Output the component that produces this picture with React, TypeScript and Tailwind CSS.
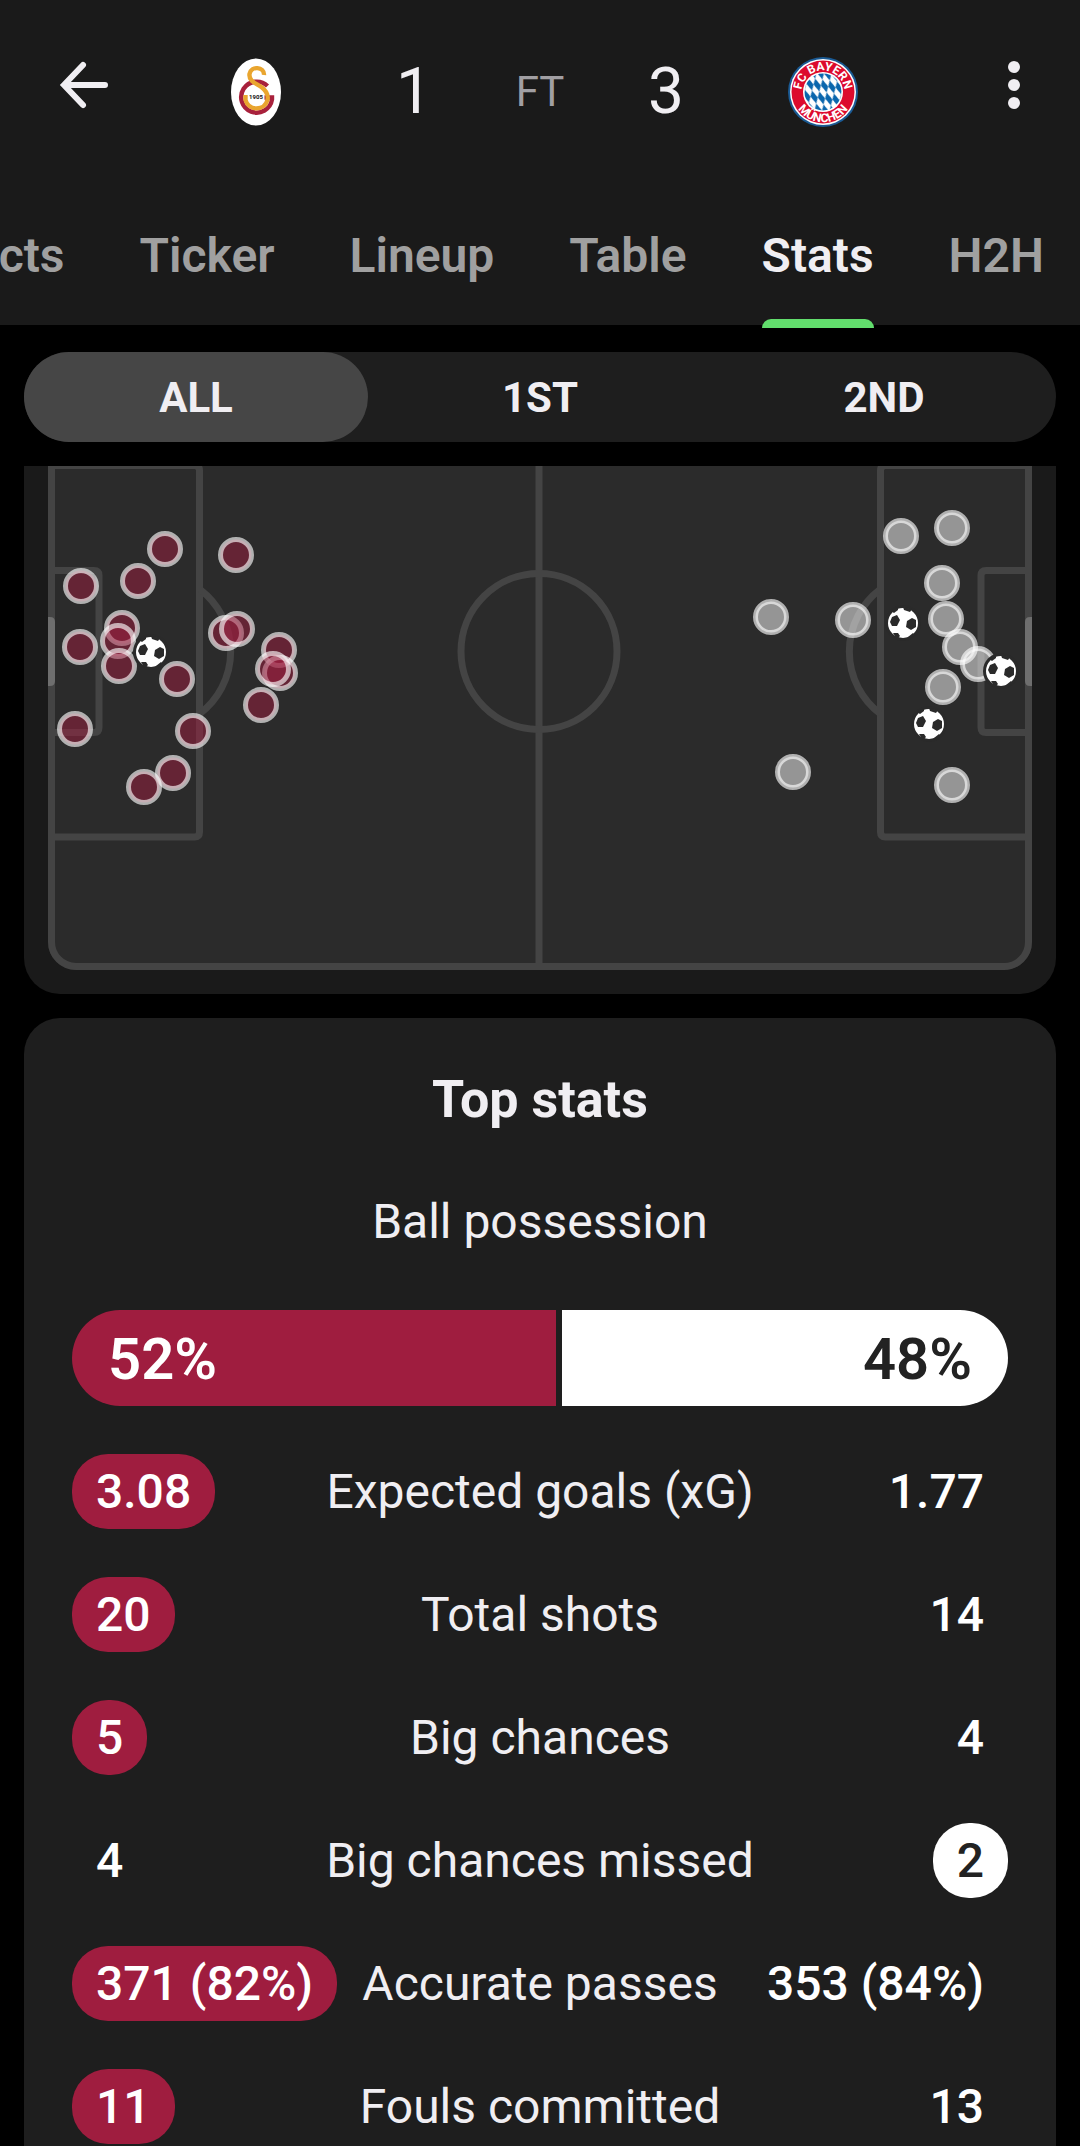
import { useState } from 'react';

const TABS = ['Facts', 'Ticker', 'Lineup', 'Table', 'Stats', 'H2H'];
const PERIODS = ['ALL', '1ST', '2ND'];

type Point = [number, number];

// shot positions on the 984x504 pitch
const HOME_SHOTS: Point[] = [
  [117, 83], [188, 89], [90, 115], [33, 120], [74, 162], [70, 175], [32, 181],
  [71, 200], [178, 167], [189, 163], [231, 184], [232, 207], [225, 203], [213, 239],
  [129, 213], [145, 265], [27, 263], [125, 307], [96, 321],
];
const AWAY_SHOTS: Point[] = [
  [853, 70], [904, 62], [894, 117], [898, 153], [912, 181], [930, 198],
  [895, 221], [723, 151], [805, 154], [745, 306], [904, 319],
];
const GOALS: Point[] = [[103, 186], [855, 157], [953, 205], [881, 258]];

const POSSESSION = { home: 52, away: 48 };

const STATS = [
  { label: 'Expected goals (xG)', home: '3.08', away: '1.77', best: 'home' },
  { label: 'Total shots', home: '20', away: '14', best: 'home' },
  { label: 'Big chances', home: '5', away: '4', best: 'home' },
  { label: 'Big chances missed', home: '4', away: '2', best: 'away' },
  { label: 'Accurate passes', home: '371 (82%)', away: '353 (84%)', best: 'home' },
  { label: 'Fouls committed', home: '11', away: '13', best: 'home' },
];

function GalatasarayCrest() {
  return (
    <svg viewBox="0 0 70 70" className="size-[70px]" role="img" aria-label="Galatasaray">
      <ellipse cx="34" cy="35" rx="25" ry="33.5" fill="#fff" />
      <g fill="none" strokeWidth="4.4">
        <path d="M45.5 29A15.5 15.5 0 1 0 50 42.5V40.5H42.5" stroke="#a8213c" />
        <path
          d="M42 18C42.5 9.5 29 8.5 27.5 17C26.5 24.5 35 26.5 40 30.5C45 34.5 46.5 38 45.5 43A11.4 11.4 0 0 1 23.5 43V38"
          stroke="#e9a52f"
        />
      </g>
      <text x="34" y="42" textAnchor="middle" fontSize="6" fontWeight="700" fill="#111">
        1905
      </text>
    </svg>
  );
}

function BayernCrest() {
  return (
    <svg viewBox="0 0 70 70" className="size-[70px]" role="img" aria-label="FC Bayern München">
      <defs>
        <pattern id="lozenges" width="7" height="13" patternUnits="userSpaceOnUse" patternTransform="translate(35 35) skewX(18) skewY(8)">
          <rect width="7" height="13" fill="#fff" />
          <path d="M3.5 0L7 6.5L3.5 13L0 6.5Z" fill="#0a66ad" />
        </pattern>
        <path id="crest-top" d="M13.5 35A21.5 21.5 0 0 1 56.5 35" />
        <path id="crest-bottom" d="M4.8 35A30.2 30.2 0 0 0 65.2 35" />
      </defs>
      <circle cx="35" cy="35" r="35" fill="#1a5a94" />
      <circle cx="35" cy="35" r="33" fill="#fff" />
      <circle cx="35" cy="35" r="31.5" fill="#dc0a2d" />
      <circle cx="35" cy="35" r="20" fill="#fff" />
      <circle cx="35" cy="35" r="18.5" fill="url(#lozenges)" />
      <g fontSize="12" fontWeight="700" fill="#fff" textAnchor="middle">
        <text>
          <textPath href="#crest-top" startOffset="50%">FC BAYERN</textPath>
        </text>
        <text>
          <textPath href="#crest-bottom" startOffset="50%">MÜNCHEN</textPath>
        </text>
      </g>
    </svg>
  );
}

function Shot({ at, color }: { at: Point; color: string }) {
  return (
    <g>
      <circle cx={at[0]} cy={at[1]} r="15.5" fill={color} fillOpacity="0.5" />
      <circle cx={at[0]} cy={at[1]} r="15.5" fill="none" stroke="#fff" strokeOpacity="0.63" strokeWidth="5" />
    </g>
  );
}

function Ball({ at }: { at: Point }) {
  return (
    <g transform={`translate(${at[0]} ${at[1]})`}>
      <circle r="18" fill="#2a2a2a" />
      <circle r="15" fill="#fff" />
      <g fill="#2a2a2a">
        <path d="M-11-6L-6-8L-3-3L-6 3L-11 3L-13-1Z" />
        <path d="M4-2L9-5L13-3L13 4L8 7L3 4Z" />
        <path d="M-12-12L-5-16L-5-13L-9-10Z" />
        <path d="M0-16L9-14L7-11L1-13Z" />
        <path d="M-10 10L-5 10L-3 13L-6 16Z" />
        <path d="M5 14L10 10L12 12L7 16Z" />
      </g>
    </g>
  );
}

function ShotMap() {
  return (
    <svg viewBox="0 0 984 504" className="block w-full" role="img" aria-label="Shot map">
      <path d="M0-40H984V476A28 28 0 0 1 956 504H28A28 28 0 0 1 0 476Z" fill="#2b2b2b" />
      <g fill="none" stroke="#444" strokeWidth="7">
        <path d="M3.5-40V476A24.5 24.5 0 0 0 28 500.5H956A24.5 24.5 0 0 0 980.5 476V-40" />
        <path d="M491-40V504" />
        <circle cx="491" cy="185.5" r="78" />
        <path d="M7-.5H146.5Q151.5-.5 151.5 4.5V366Q151.5 371 146.5 371H7" />
        <path d="M977-.5H837.5Q832.5-.5 832.5 4.5V366Q832.5 371 837.5 371H977" />
        <path d="M7 104.5H46Q51 104.5 51 109.5V261.5Q51 266.5 46 266.5H7" />
        <path d="M977 104.5H938Q933 104.5 933 109.5V261.5Q933 266.5 938 266.5H977" />
        <path d="M152 123.5A78 78 0 0 1 152 247.5" />
        <path d="M832 123.5A78 78 0 0 0 832 247.5" />
      </g>
      <path d="M0 151H2Q7 151 7 156V215Q7 220 2 220H0Z" fill="#6e6e6e" />
      <path d="M984 151H982Q977 151 977 156V215Q977 220 982 220H984Z" fill="#6e6e6e" />
      {HOME_SHOTS.map((at) => (
        <Shot key={at.join()} at={at} color="#a01d3f" />
      ))}
      {AWAY_SHOTS.map((at) => (
        <Shot key={at.join()} at={at} color="#fff" />
      ))}
      {GOALS.map((at) => (
        <Ball key={at.join()} at={at} />
      ))}
    </svg>
  );
}

function Header() {
  return (
    <div className="flex h-[170px] items-center justify-between px-[49px]">
      <button type="button" aria-label="Back" className="flex size-[72px] items-center justify-center">
        <svg viewBox="0 0 72 72" className="size-[72px]" fill="none" stroke="#f0eef2" strokeWidth="6" strokeLinecap="round">
          <path d="M34 16L15 36L34 56M16 36H56" />
        </svg>
      </button>

      <div className="flex items-center gap-[54px] pt-3.5 text-[#f0eef2]">
        <div className="flex items-center gap-[86px]">
          <GalatasarayCrest />
          <span className="w-[72px] text-center text-[64px] leading-[72px]">1</span>
        </div>
        <span className="w-[72px] text-center text-[42px] leading-[72px] text-[#a19fa3]">FT</span>
        <div className="flex items-center gap-[86px]">
          <span className="w-[72px] text-center text-[64px] leading-[72px]">3</span>
          <BayernCrest />
        </div>
      </div>

      <button type="button" aria-label="More options" className="flex size-[72px] items-center justify-center">
        <svg viewBox="0 0 72 72" className="size-[72px]" fill="#f0eef2">
          <circle cx="55" cy="18" r="6" />
          <circle cx="55" cy="36" r="6" />
          <circle cx="55" cy="54" r="6" />
        </svg>
      </button>
    </div>
  );
}

export default function App() {
  const [tab, setTab] = useState('Stats');
  const [period, setPeriod] = useState('ALL');

  return (
    <div className="flex min-h-screen flex-col bg-black font-[Roboto,sans-serif]">
      <header className="bg-[#1a1a1a]">
        <Header />
        {/* tabs are scrolled to their end */}
        <nav className="overflow-x-clip">
          <div className="flex justify-end gap-[75px] pr-9">
            {TABS.map((name) => (
              <button
                key={name}
                type="button"
                onClick={() => setTab(name)}
                className={`relative h-[155px] shrink-0 pt-4 text-5xl font-semibold ${name === tab ? 'text-[#f0eef2]' : 'text-[#a0a0a0]'}`}
              >
                {name}
                {name === tab && (
                  <span className="absolute inset-x-0 -bottom-[3px] h-[9px] rounded-t-[9px] bg-[#62de6d]" />
                )}
              </button>
            ))}
          </div>
        </nav>
      </header>

      <main className="flex flex-1 flex-col px-6 pt-[27px]">
        <div className="mb-6 grid grid-cols-3 rounded-full bg-[#1e1e1e]">
          {PERIODS.map((name) => (
            <button
              key={name}
              type="button"
              onClick={() => setPeriod(name)}
              className={`h-[90px] rounded-full text-[42px] font-bold text-[#f0eef2] ${name === period ? 'bg-[#464646]' : ''}`}
            >
              {name}
            </button>
          ))}
        </div>

        <section className="mb-6 overflow-hidden rounded-b-[36px] bg-[#1a1a1a] px-6 pb-6">
          <ShotMap />
        </section>

        <section className="flex-1 rounded-t-[36px] bg-[#1e1e1e] px-12 pt-12 text-5xl text-[#f0eef2]">
          <h2 className="text-center text-[52px] leading-[68px] font-bold">Top stats</h2>
          <p className="mt-[58px] text-center leading-[60px]">Ball possession</p>

          <div className="mt-[58px] mb-12 flex h-24 gap-1.5 overflow-hidden rounded-full text-[58px] leading-[98px] font-semibold">
            <div className="bg-[#9f1d3f] text-white" style={{ flex: `${POSSESSION.home} 0 0` }}>
              <span className="block px-9">{POSSESSION.home}%</span>
            </div>
            <div className="bg-white text-right text-[#222]" style={{ flex: `${POSSESSION.away} 0 0` }}>
              <span className="block px-9">{POSSESSION.away}%</span>
            </div>
          </div>

          <table className="block w-full">
            <tbody className="flex flex-col gap-12">
              {STATS.map((stat) => (
                <tr key={stat.label} className="grid grid-cols-[1fr_auto_1fr] items-center leading-[75px] whitespace-nowrap">
                  <td className="flex p-0 font-medium text-white">
                    <span className={`rounded-[36px] px-6 ${stat.best === 'home' ? 'bg-[#9f1d3f]' : ''}`}>{stat.home}</span>
                  </td>
                  <th scope="row" className="p-0 font-normal">
                    {stat.label}
                  </th>
                  <td className="flex justify-end p-0 font-medium text-white">
                    <span className={`rounded-[36px] px-6 ${stat.best === 'away' ? 'bg-white text-[#222]' : ''}`}>{stat.away}</span>
                  </td>
                </tr>
              ))}
            </tbody>
          </table>
        </section>
      </main>
    </div>
  );
}
